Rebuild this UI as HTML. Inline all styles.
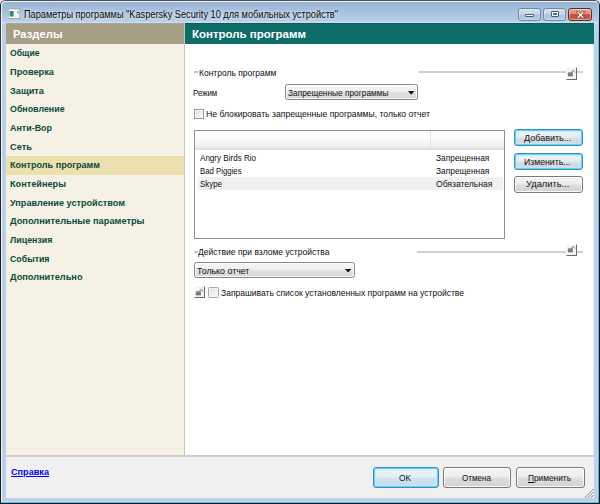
<!DOCTYPE html>
<html lang="ru"><head><meta charset="utf-8"><title>Параметры программы</title>
<style>
html,body{margin:0;padding:0;width:600px;height:504px;overflow:hidden;background:#e8e4d0;font-family:"Liberation Sans",sans-serif;}
.a{position:absolute;box-sizing:border-box;}
.t{position:absolute;white-space:pre;font-family:"Liberation Sans",sans-serif;}
#win{left:0;top:0;width:600px;height:504px;border-radius:5.5px 5.5px 0 0;background:#b7cfe9;overflow:hidden;}
.btn{border:1px solid #7a7a7a;border-radius:3px;background:linear-gradient(#f4f4f4 0%,#ececec 48%,#dedede 52%,#d2d2d2 100%);box-shadow:inset 0 0 0 1px rgba(255,255,255,.85);}
.btn.def{border-color:#3a8cc6;box-shadow:inset 0 0 0 1px #62d2f6, inset 0 0 1.5px 2px rgba(190,235,252,.8);background:linear-gradient(#f1f4f6 0%,#e9edf0 48%,#dadfe3 52%,#d0d6db 100%);}
.combo{border:1px solid #878787;border-radius:2.5px;background:linear-gradient(#f6f6f6 0%,#eeeeee 48%,#e2e2e2 52%,#d6d6d6 100%);box-shadow:inset 0 0 0 1px rgba(255,255,255,.85);}
.chk{border:1px solid #9a9b9c;background:linear-gradient(135deg,#d6d9dc 0%,#eef0f2 55%,#fbfbfb 100%);box-shadow:inset 0 0 0 1px #f4f4f4;}
.lock{background:#f3f3f3;border-top:1px solid #fbfbfb;border-left:1px solid #fbfbfb;border-right:1.2px solid #6a6a6a;border-bottom:1.4px solid #6a6a6a;}
</style></head><body>
<div id="win" class="a">
  <!-- title bar -->
  <div class="a" style="left:0;top:0;width:600px;height:24px;background:linear-gradient(#96b2d2 0px,#98b4d3 2px,#b5cee8 21px,#cddcf3 22.5px,#cddcf3 24px);"></div>
  <!-- frame edges -->
  <div class="a" style="left:2px;top:24px;width:4px;height:478px;background:#b9d0ea;"></div>
  <div class="a" style="left:594px;top:24px;width:4px;height:478px;background:linear-gradient(90deg,#c3d6ed,#b7cfe9 60%,#c9dbf0);"></div>
  <div class="a" style="left:0;top:498px;width:600px;height:4px;background:linear-gradient(#b9d0ea 0,#b9d0ea 3.2px,#d5ddf0 4px);"></div>
  <!-- bottom cyan + black -->
  <div class="a" style="left:0;top:501.7px;width:600px;height:1px;background:#47c6f0;"></div>
  <div class="a" style="left:0;top:502.6px;width:600px;height:1.4px;background:#0b1118;"></div>
  <!-- right cyan + black -->
  <div class="a" style="left:597.8px;top:4px;width:1.2px;height:499px;background:linear-gradient(#bfe3f6 0,#62c0ea 40px,#4ab8e6 100%);"></div>
  <div class="a" style="left:599px;top:4px;width:1px;height:500px;background:#11161c;"></div>
  <!-- left black + white -->
  <div class="a" style="left:1px;top:4px;width:1px;height:498px;background:#f2f6fb;"></div>
  <div class="a" style="left:0;top:4px;width:1px;height:500px;background:linear-gradient(#454545 0,#2a2a2a 120px,#1b1b1b 300px);"></div>
  <!-- top rounded outline -->
  <div class="a" style="left:0;top:0;width:600px;height:12px;border-radius:5.5px 5.5px 0 0;border:1px solid #4b4d50;border-bottom:none;border-left-color:#2a2a2a;border-right-color:#1c2228;"></div>
  <div class="a" style="left:1px;top:1px;width:598px;height:11px;border-radius:4.5px 4.5px 0 0;border:1px solid #e9f0f9;border-bottom:none;border-right-color:#9fd6f2;"></div>
  <!-- title icon -->
  <svg class="a" style="left:7.8px;top:8px" width="12.6" height="11" viewBox="0 0 12.6 11">
    <defs><linearGradient id="ig" x1="0" y1="0" x2="0" y2="1"><stop offset="0" stop-color="#3a74b4"/><stop offset=".45" stop-color="#2f8f86"/><stop offset="1" stop-color="#35a455"/></linearGradient></defs>
    <rect x="0.4" y="0.4" width="11.6" height="10.2" rx=".8" fill="#fbfbf9" stroke="#a3a3a0" stroke-width=".7"/>
    <rect x="0.4" y="0.3" width="11.6" height="1" fill="#a5a5a2"/>
    <rect x="11.6" y="1" width=".7" height="9.8" fill="#9a9a98"/><rect x="0.6" y="10.2" width="11.6" height=".7" fill="#9a9a98"/>
    <rect x="1.6" y="3" width="4" height="5.6" fill="url(#ig)"/>
    <path d="M1.6 4.4H5.6M1.6 5.8H5.6M1.6 7.2H5.6M3 3V8.6M4.3 3V8.6" stroke="#2b7f78" stroke-width=".25" opacity=".7"/>
    <rect x="9.5" y="2.8" width="1" height="3" fill="url(#ig)"/>
    <rect x="6.8" y="7.6" width="1.8" height=".8" fill="#b0b0b0"/>
  </svg>

  <!-- caption buttons -->
  <div class="a" style="left:517.5px;top:8px;width:23.5px;height:12.7px;border:1px solid #7386a0;border-radius:3px;background:linear-gradient(#cfdff0 0%,#c2d5ea 48%,#a9c2de 52%,#b4cbe5 100%);box-shadow:inset 0 0 0 1px rgba(255,255,255,.3);"></div>
  <div class="a" style="left:543px;top:8px;width:23.2px;height:12.7px;border:1px solid #7386a0;border-radius:3px;background:linear-gradient(#cfdff0 0%,#c2d5ea 48%,#a9c2de 52%,#b4cbe5 100%);box-shadow:inset 0 0 0 1px rgba(255,255,255,.3);"></div>
  <div class="a" style="left:568.2px;top:8px;width:24px;height:12.7px;border:1px solid #5d2b2b;border-radius:3px;background:linear-gradient(#e6ab9c 0%,#d98370 48%,#c4472c 52%,#cf6a45 100%);box-shadow:inset 0 0 0 1px rgba(255,255,255,.4);"></div>
  <!-- min glyph -->
  <div class="a" style="left:525px;top:14.3px;width:8.5px;height:3.2px;background:#fff;border:.8px solid #4e5a6e;border-radius:1px;"></div>
  <!-- max glyph -->
  <div class="a" style="left:550.5px;top:11px;width:8.6px;height:6.2px;background:#fff;border:.8px solid #4e5a6e;border-radius:1px;"></div>
  <div class="a" style="left:553px;top:13.2px;width:3.6px;height:1.8px;background:#5a6f94;"></div>
  <!-- close glyph -->
  <svg class="a" style="left:574.5px;top:10.5px" width="11" height="8" viewBox="0 0 11 8">
    <path d="M1.2 0.8 L3.6 0.8 L5.5 2.7 L7.4 0.8 L9.8 0.8 L6.9 4 L9.8 7.2 L7.4 7.2 L5.5 5.3 L3.6 7.2 L1.2 7.2 L4.1 4 Z" fill="#fff" stroke="#5a3030" stroke-width=".7" stroke-linejoin="round"/>
  </svg>

  <!-- client -->
  <div class="a" style="left:6px;top:23.4px;width:588px;height:474.8px;background:#f0f0f0;"></div>
  <!-- left header -->
  <div class="a" style="left:6px;top:23.4px;width:178px;height:20.2px;background:#a59e84;border-top:1px solid #aaa58f;"></div>
  <!-- left panel -->
  <div class="a" style="left:6px;top:43.6px;width:178px;height:411.9px;background:#f5f2e5;"></div>
  <!-- selected -->
  <div class="a" style="left:6px;top:155.5px;width:178px;height:19px;background:#ece0ae;"></div>
  <!-- vertical separator -->
  <div class="a" style="left:183.8px;top:23.4px;width:1.3px;height:432px;background:#c6c6c2;"></div>
  <!-- right header -->
  <div class="a" style="left:185px;top:23.4px;width:409px;height:20.2px;background:#0f6d69;border-top:1px solid #0a5c59;"></div>
  <!-- right panel -->
  <div class="a" style="left:185px;top:43.6px;width:407.6px;height:411.9px;background:#ffffff;"></div>
  <div class="a" style="left:592.6px;top:43.6px;width:1.4px;height:411.9px;background:#e4ecf6;"></div>
  <!-- footer line -->
  <div class="a" style="left:6px;top:455.3px;width:588px;height:1.3px;background:#cbcbcb;"></div>

  <!-- group 1 -->
  <div class="a" style="left:194px;top:71.4px;width:4.2px;height:1.3px;background:#c4c4c4;"></div>
  <div class="a" style="left:418px;top:71.3px;width:165px;height:1.5px;background:#d0d0d0;"></div>
  <div class="a lock" style="left:565.8px;top:67px;width:11.7px;height:12.5px;"></div>
  <svg class="a" style="left:567.2px;top:68.5px" width="10" height="10" viewBox="0 0 10 10">
    <rect x="0.9" y="3.4" width="5" height="3.9" fill="#6c6c6c"/>
    <path d="M4.5 3.5 C4.5 1.2 7.8 1.0 7.8 3.5" fill="none" stroke="#6c6c6c" stroke-width=".9"/>
    <rect x="0.9" y="4.5" width="5" height=".45" fill="#a4a4a4"/><rect x="0.9" y="5.8" width="5" height=".45" fill="#a4a4a4"/>
  </svg>
  <!-- combo 1 -->
  <div class="a combo" style="left:284.8px;top:84.2px;width:133.2px;height:16.2px;"></div>
  <svg class="a" style="left:408.2px;top:90.8px" width="6.4" height="3.8" viewBox="0 0 6.4 3.8"><path d="M0 0H6.4L3.2 3.8Z" fill="#111"/></svg>
  <!-- checkbox 1 -->
  <div class="a chk" style="left:193.8px;top:109px;width:10.2px;height:10px;"></div>

  <!-- list -->
  <div class="a" style="left:194px;top:130px;width:310.6px;height:109.4px;background:#fff;border:1px solid #8a8f99;"></div>
  <div class="a" style="left:195px;top:131px;width:308.6px;height:19px;background:linear-gradient(#ffffff 0%,#fbfbfc 40%,#eff0f2 80%,#e2e3e5 94%,#d9dadc 100%);"></div>
  <div class="a" style="left:430.3px;top:131px;width:1px;height:18.4px;background:#dfe2e6;"></div>
  <div class="a" style="left:198px;top:177px;width:305.4px;height:13px;background:#f0f0f0;"></div>

  <!-- side buttons -->
  <div class="a btn def" style="left:514.2px;top:129.2px;width:68.6px;height:16.6px;"></div>
  <div class="a btn def" style="left:514.2px;top:153.3px;width:68.6px;height:16.7px;"></div>
  <div class="a btn" style="left:514.2px;top:176.3px;width:68.6px;height:16.4px;"></div>

  <!-- group 2 -->
  <div class="a" style="left:193.6px;top:251.4px;width:4px;height:1.3px;background:#c4c4c4;"></div>
  <div class="a" style="left:417px;top:251.3px;width:166px;height:1.5px;background:#d0d0d0;"></div>
  <div class="a lock" style="left:565.8px;top:244px;width:11.7px;height:12.2px;"></div>
  <svg class="a" style="left:567.2px;top:245.3px" width="10" height="10" viewBox="0 0 10 10">
    <rect x="0.9" y="3.4" width="5" height="3.9" fill="#6c6c6c"/>
    <path d="M4.5 3.5 C4.5 1.2 7.8 1.0 7.8 3.5" fill="none" stroke="#6c6c6c" stroke-width=".9"/>
    <rect x="0.9" y="4.5" width="5" height=".45" fill="#a4a4a4"/><rect x="0.9" y="5.8" width="5" height=".45" fill="#a4a4a4"/>
  </svg>
  <!-- combo 2 -->
  <div class="a combo" style="left:194px;top:261.8px;width:160.8px;height:16px;"></div>
  <svg class="a" style="left:345.2px;top:268.6px" width="6.2" height="3.7" viewBox="0 0 6.4 3.8"><path d="M0 0H6.4L3.2 3.8Z" fill="#111"/></svg>
  <!-- lock 3 + checkbox 2 -->
  <div class="a lock" style="left:193.6px;top:285.8px;width:11.9px;height:12.4px;"></div>
  <svg class="a" style="left:195.1px;top:287.8px" width="10" height="10" viewBox="0 0 10 10">
    <rect x="0.9" y="3.4" width="5" height="3.9" fill="#6c6c6c"/>
    <path d="M4.5 3.5 C4.5 1.2 7.8 1.0 7.8 3.5" fill="none" stroke="#6c6c6c" stroke-width=".9"/>
    <rect x="0.9" y="4.5" width="5" height=".45" fill="#a4a4a4"/><rect x="0.9" y="5.8" width="5" height=".45" fill="#a4a4a4"/>
  </svg>
  <div class="a chk" style="left:208.3px;top:287px;width:10.7px;height:10.9px;border-color:#a8a9aa;border-radius:1.5px;"></div>

  <!-- bottom buttons -->
  <div class="a btn def" style="left:373px;top:467.2px;width:65.8px;height:20.6px;background:linear-gradient(#edf4f9 0%,#e3eef6 48%,#d1e2ef 52%,#c7dcec 100%);"></div>
  <div class="a btn" style="left:443.4px;top:467.2px;width:67.8px;height:20.6px;"></div>
  <div class="a btn" style="left:515.6px;top:467.2px;width:69.2px;height:20.6px;"></div>

  <!-- resize grip -->
  <svg class="a" style="left:584px;top:488px" width="10" height="10" viewBox="0 0 10 10">
    <path d="M9.6 1.2 L1 9.8 M9.6 4.2 L4 9.8 M9.6 7.2 L7 9.8" stroke="#a0a0a0" stroke-width="1.15" fill="none"/>
    <path d="M9.6 2.4 L2.2 9.8 M9.6 5.4 L5.2 9.8 M9.6 8.4 L8.2 9.8" stroke="#fbfbfb" stroke-width=".9" fill="none"/>
  </svg>

<span class="t" style="left:24.0px;top:8.34px;font-size:10.0px;line-height:13.0px;font-weight:400;color:#06060c;transform:scaleX(0.9189);transform-origin:0 0;text-shadow:0 0 3px rgba(255,255,255,.75),0 0 6px rgba(255,255,255,.55),0 0 9px rgba(255,255,255,.4);">Параметры программы "Kaspersky Security 10 для мобильных устройств"</span>
<span class="t" style="left:13.0px;top:26.64px;font-size:11.4px;line-height:14.82px;font-weight:700;color:#ffffff;transform:scaleX(0.9875);transform-origin:0 0;">Разделы</span>
<span class="t" style="left:192.0px;top:26.64px;font-size:11.4px;line-height:14.82px;font-weight:700;color:#ffffff;transform:scaleX(1.0080);transform-origin:0 0;">Контроль программ</span>
<span class="t" style="left:10.0px;top:47.23px;font-size:9.5px;line-height:12.35px;font-weight:700;color:#0b4a3c;transform:scaleX(0.9134);transform-origin:0 0;">Общие</span>
<span class="t" style="left:10.0px;top:65.90px;font-size:9.5px;line-height:12.35px;font-weight:700;color:#0b4a3c;transform:scaleX(0.9717);transform-origin:0 0;">Проверка</span>
<span class="t" style="left:10.0px;top:84.57px;font-size:9.5px;line-height:12.35px;font-weight:700;color:#0b4a3c;transform:scaleX(0.9706);transform-origin:0 0;">Защита</span>
<span class="t" style="left:10.0px;top:103.23px;font-size:9.5px;line-height:12.35px;font-weight:700;color:#0b4a3c;transform:scaleX(0.9321);transform-origin:0 0;">Обновление</span>
<span class="t" style="left:10.0px;top:121.90px;font-size:9.5px;line-height:12.35px;font-weight:700;color:#0b4a3c;transform:scaleX(0.9389);transform-origin:0 0;">Анти-Вор</span>
<span class="t" style="left:10.0px;top:140.57px;font-size:9.5px;line-height:12.35px;font-weight:700;color:#0b4a3c;transform:scaleX(0.9771);transform-origin:0 0;">Сеть</span>
<span class="t" style="left:10.0px;top:159.24px;font-size:9.5px;line-height:12.35px;font-weight:700;color:#0b4a3c;transform:scaleX(0.9541);transform-origin:0 0;">Контроль программ</span>
<span class="t" style="left:10.0px;top:177.90px;font-size:9.5px;line-height:12.35px;font-weight:700;color:#0b4a3c;transform:scaleX(0.9645);transform-origin:0 0;">Контейнеры</span>
<span class="t" style="left:10.0px;top:196.57px;font-size:9.5px;line-height:12.35px;font-weight:700;color:#0b4a3c;transform:scaleX(0.9617);transform-origin:0 0;">Управление устройством</span>
<span class="t" style="left:10.0px;top:215.24px;font-size:9.5px;line-height:12.35px;font-weight:700;color:#0b4a3c;transform:scaleX(0.9742);transform-origin:0 0;">Дополнительные параметры</span>
<span class="t" style="left:10.0px;top:233.90px;font-size:9.5px;line-height:12.35px;font-weight:700;color:#0b4a3c;transform:scaleX(0.9344);transform-origin:0 0;">Лицензия</span>
<span class="t" style="left:10.0px;top:252.57px;font-size:9.5px;line-height:12.35px;font-weight:700;color:#0b4a3c;transform:scaleX(0.9253);transform-origin:0 0;">События</span>
<span class="t" style="left:10.0px;top:271.24px;font-size:9.5px;line-height:12.35px;font-weight:700;color:#0b4a3c;transform:scaleX(0.9671);transform-origin:0 0;">Дополнительно</span>
<span class="t" style="left:198.6px;top:67.93px;font-size:9.0px;line-height:11.7px;font-weight:400;color:#0e0e14;transform:scaleX(0.9421);transform-origin:0 0;">Контроль программ</span>
<span class="t" style="left:193.4px;top:87.93px;font-size:9.0px;line-height:11.7px;font-weight:400;color:#0e0e14;transform:scaleX(0.8721);transform-origin:0 0;">Режим</span>
<span class="t" style="left:287.5px;top:87.93px;font-size:9.0px;line-height:11.7px;font-weight:400;color:#0e0e14;transform:scaleX(0.9256);transform-origin:0 0;">Запрещенные программы</span>
<span class="t" style="left:206.0px;top:109.43px;font-size:9.0px;line-height:11.7px;font-weight:400;color:#0e0e14;transform:scaleX(0.9576);transform-origin:0 0;">Не блокировать запрещенные программы, только отчет</span>
<span class="t" style="left:200.0px;top:152.53px;font-size:9.0px;line-height:11.7px;font-weight:400;color:#0e0e14;transform:scaleX(0.8956);transform-origin:0 0;">Angry Birds Rio</span>
<span class="t" style="left:200.0px;top:165.53px;font-size:9.0px;line-height:11.7px;font-weight:400;color:#0e0e14;transform:scaleX(0.8658);transform-origin:0 0;">Bad Piggies</span>
<span class="t" style="left:200.0px;top:178.53px;font-size:9.0px;line-height:11.7px;font-weight:400;color:#0e0e14;transform:scaleX(0.8795);transform-origin:0 0;">Skype</span>
<span class="t" style="left:435.6px;top:152.53px;font-size:9.0px;line-height:11.7px;font-weight:400;color:#0e0e14;transform:scaleX(0.9292);transform-origin:0 0;">Запрещенная</span>
<span class="t" style="left:435.6px;top:165.53px;font-size:9.0px;line-height:11.7px;font-weight:400;color:#0e0e14;transform:scaleX(0.9292);transform-origin:0 0;">Запрещенная</span>
<span class="t" style="left:435.6px;top:178.53px;font-size:9.0px;line-height:11.7px;font-weight:400;color:#0e0e14;transform:scaleX(0.9511);transform-origin:0 0;">Обязательная</span>
<span class="t" style="left:524.4px;top:132.53px;font-size:9.0px;line-height:11.7px;font-weight:400;color:#0e0e14;transform:scaleX(1.0004);transform-origin:0 0;">Добавить...</span>
<span class="t" style="left:524.4px;top:156.73px;font-size:9.0px;line-height:11.7px;font-weight:400;color:#0e0e14;transform:scaleX(0.9665);transform-origin:0 0;">Изменить...</span>
<span class="t" style="left:526.4px;top:179.43px;font-size:9.0px;line-height:11.7px;font-weight:400;color:#0e0e14;transform:scaleX(1.0364);transform-origin:0 0;">Удалить...</span>
<span class="t" style="left:198.0px;top:246.93px;font-size:9.0px;line-height:11.7px;font-weight:400;color:#0e0e14;transform:scaleX(0.9480);transform-origin:0 0;">Действие при взломе устройства</span>
<span class="t" style="left:197.0px;top:265.53px;font-size:9.0px;line-height:11.7px;font-weight:400;color:#0e0e14;transform:scaleX(0.9786);transform-origin:0 0;">Только отчет</span>
<span class="t" style="left:221.0px;top:287.93px;font-size:9.0px;line-height:11.7px;font-weight:400;color:#0e0e14;transform:scaleX(0.9460);transform-origin:0 0;">Запрашивать список установленных программ на устройстве</span>
<span class="t" style="left:11.0px;top:465.83px;font-size:9.5px;line-height:12.35px;font-weight:700;color:#0000ff;transform:scaleX(0.9601);transform-origin:0 0;text-decoration:underline;">Справка</span>
<span class="t" style="left:399.4px;top:472.53px;font-size:9.0px;line-height:11.7px;font-weight:400;color:#0e0e14;transform:scaleX(0.9220);transform-origin:0 0;">OK</span>
<span class="t" style="left:462.0px;top:472.53px;font-size:9.0px;line-height:11.7px;font-weight:400;color:#0e0e14;transform:scaleX(0.8979);transform-origin:0 0;">Отмена</span>
<span class="t" style="left:528.0px;top:472.53px;font-size:9.0px;line-height:11.7px;font-weight:400;color:#0e0e14;transform:scaleX(0.9244);transform-origin:0 0;"><u>П</u>рименить</span>
</div>
</body></html>
